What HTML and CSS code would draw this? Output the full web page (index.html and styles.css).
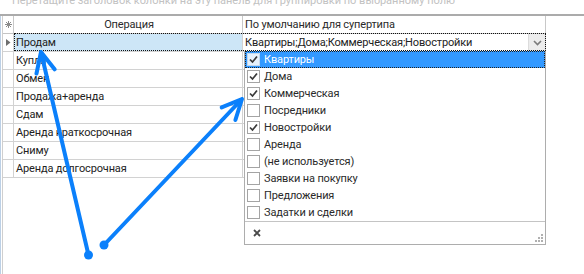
FILE: index.html
```html
<!DOCTYPE html>
<html lang="ru">
<head>
<meta charset="utf-8">
<link rel="stylesheet" href="styles.css">
</head>
<body>
<div class="page">
  <div class="group"><span>Перетащите заголовок колонки на эту панель для группировки по выбранному полю</span></div>
  <div class="frame">
    <div class="grid">
      <div class="row head">
        <div class="ind"><svg width="7" height="7" viewBox="0 0 7 7"><g stroke="#8a8a8a" stroke-width="1"><path d="M3.5 0V7M0 3.5H7M1 1L6 6M6 1L1 6"/></g></svg></div>
        <div class="cells">
          <div class="c1 hc center">Операция</div>
          <div class="c2 hc">По умолчанию для супертипа</div>
        </div>
      </div>
      <div class="row">
        <div class="ind"><svg width="5" height="7" viewBox="0 0 5 7"><path d="M0 0L4.5 3.5L0 7Z" fill="#6e6e6e"/></svg></div>
        <div class="cells focus">
          <div class="c1 selbg">Продам</div>
          <div class="c2 editor"><span>Квартиры;Дома;Коммерческая;Новостройки</span><div class="btn"><svg width="9" height="6" viewBox="0 0 9 6"><path d="M1 1L4.5 4.5L8 1" stroke="#7a7a7a" stroke-width="1.6" fill="none"/></svg></div></div>
        </div>
      </div>
      <div class="row"><div class="ind"></div><div class="cells"><div class="c1">Купля</div><div class="c2"></div></div></div>
      <div class="row"><div class="ind"></div><div class="cells"><div class="c1">Обмен</div><div class="c2"></div></div></div>
      <div class="row"><div class="ind"></div><div class="cells"><div class="c1">Продажа+аренда</div><div class="c2"></div></div></div>
      <div class="row"><div class="ind"></div><div class="cells"><div class="c1">Сдам</div><div class="c2"></div></div></div>
      <div class="row"><div class="ind"></div><div class="cells"><div class="c1">Аренда краткосрочная</div><div class="c2"></div></div></div>
      <div class="row"><div class="ind"></div><div class="cells"><div class="c1">Сниму</div><div class="c2"></div></div></div>
      <div class="row"><div class="ind"></div><div class="cells"><div class="c1">Аренда долгосрочная</div><div class="c2"></div></div></div>
    </div>
  </div>

  <div class="popup">
    <div class="items">
      <div class="item hl"><span class="cb on"><svg width="11" height="11" viewBox="0 0 11 11"><path d="M2 5.5L4.5 8L9 2.5" stroke="#3a3a3a" stroke-width="1.7" fill="none"/></svg></span><span>Квартиры</span></div>
      <div class="item"><span class="cb on"><svg width="11" height="11" viewBox="0 0 11 11"><path d="M2 5.5L4.5 8L9 2.5" stroke="#3a3a3a" stroke-width="1.7" fill="none"/></svg></span><span>Дома</span></div>
      <div class="item"><span class="cb on"><svg width="11" height="11" viewBox="0 0 11 11"><path d="M2 5.5L4.5 8L9 2.5" stroke="#3a3a3a" stroke-width="1.7" fill="none"/></svg></span><span>Коммерческая</span></div>
      <div class="item"><span class="cb"></span><span>Посредники</span></div>
      <div class="item"><span class="cb on"><svg width="11" height="11" viewBox="0 0 11 11"><path d="M2 5.5L4.5 8L9 2.5" stroke="#3a3a3a" stroke-width="1.7" fill="none"/></svg></span><span>Новостройки</span></div>
      <div class="item"><span class="cb"></span><span>Аренда</span></div>
      <div class="item"><span class="cb"></span><span>(не используется)</span></div>
      <div class="item"><span class="cb"></span><span>Заявки на покупку</span></div>
      <div class="item"><span class="cb"></span><span>Предложения</span></div>
      <div class="item"><span class="cb"></span><span>Задатки и сделки</span></div>
    </div>
    <div class="footer">
      <svg class="close" width="8" height="8" viewBox="0 0 8 8"><path d="M1 1L7 7M7 1L1 7" stroke="#4a4a4a" stroke-width="1.8"/></svg>
      <svg class="grip" width="8" height="8" viewBox="0 0 8 8"><g fill="#b0b0b0"><rect x="6" y="0" width="2" height="2"/><rect x="3" y="3" width="2" height="2"/><rect x="6" y="3" width="2" height="2"/><rect x="0" y="6" width="2" height="2"/><rect x="3" y="6" width="2" height="2"/><rect x="6" y="6" width="2" height="2"/></g></svg>
    </div>
  </div>

  <svg class="arrows" width="584" height="274" viewBox="0 0 584 274">
    <g stroke="#0b80fb" stroke-width="4" stroke-linecap="round" stroke-linejoin="round" fill="none">
      <path d="M88.5 255L41 52M36.5 73.5L41 52L54.6 69.3"/>
      <path d="M104 245L242 99M221.7 107.4L242 99L235.4 120"/>
    </g>
    <circle cx="88.5" cy="255" r="4.5" fill="#0b80fb"/>
    <circle cx="104" cy="245" r="4.5" fill="#0b80fb"/>
  </svg>
</div>
</body>
</html>
```

FILE: styles.css
```css
* { box-sizing: border-box; }

body {
  margin: 0;
  background: #fff;
  font-family: Roboto, "Noto Sans", sans-serif;
  font-size: 11px;
  letter-spacing: -0.15px;
  color: #222;
}

.page {
  position: relative;
  width: 584px;
  height: 274px;
  overflow: hidden;
  display: flex;
  flex-direction: column;
}

.group {
  flex: none;
  height: 16px;
  border-bottom: 2px solid #ababab;
  overflow: hidden;
  padding-left: 12px;
  color: #c2c2c2;
  line-height: 14px;
  letter-spacing: 0;
}

.group span {
  display: block;
  margin-top: -6px;
  white-space: nowrap;
}

.frame {
  flex: 1;
  border-left: 1px solid #bcd0e6;
  padding-left: 1px;
}

.grid {
  height: 100%;
  border-left: 1px solid #cfcfcf;
}

.row {
  display: flex;
  height: 18px;
  line-height: 17px;
}

.ind {
  width: 11px;
  border-right: 1px solid #d2d2d2;
  border-bottom: 1px solid #d2d2d2;
  display: flex;
  align-items: center;
  justify-content: center;
}

.cells {
  display: flex;
}

.c1, .c2 {
  border-right: 1px solid #d2d2d2;
  border-bottom: 1px solid #d2d2d2;
  white-space: nowrap;
  overflow: hidden;
  padding-left: 2px;
}

.c1 { width: 229px; }
.c2 { width: 303px; }

.head .ind,
.head .c1,
.head .c2 {
  border-bottom-color: #c4c4c4;
  border-right-color: #c8c8c8;
}

.hc { color: #2a2a2a; }
.center { text-align: center; }

.selbg { background: #cde6f7; }

.focus { position: relative; }
.focus::after {
  content: "";
  position: absolute;
  left: 0;
  right: 0;
  top: -1px;
  bottom: 1px;
  border: 1px dotted #111;
  pointer-events: none;
}

.editor {
  display: flex;
  justify-content: space-between;
  padding-right: 0;
}

.btn {
  width: 17px;
  height: 17px;
  background: #ececec;
  border-left: 1px solid #dcdcdc;
  display: flex;
  align-items: center;
  justify-content: center;
}

.popup {
  position: absolute;
  left: 244px;
  top: 51px;
  width: 302px;
  height: 194px;
  border: 1px solid #adadad;
  border-top: none;
  background: #fff;
  display: flex;
  flex-direction: column;
}

.item {
  height: 17px;
  display: flex;
  align-items: center;
  gap: 4px;
  padding-left: 2px;
  color: #2a2a2a;
  white-space: nowrap;
}

.item.hl {
  background: #3399ff;
  color: #fff;
  border: 1px dotted #222;
  padding-left: 1px;
}

.cb {
  width: 13px;
  height: 13px;
  border: 1px solid #a4a4a4;
  background: #fff;
  display: flex;
  align-items: center;
  justify-content: center;
  flex: none;
}

.hl .cb {
  background: #e6f1fc;
  border-color: #c2d8ee;
}

.footer {
  flex: 1;
  border-top: 1px solid #c4c4c4;
  display: flex;
  align-items: center;
  justify-content: space-between;
  padding-left: 8px;
  padding-right: 2px;
}

.grip {
  align-self: flex-end;
  margin-bottom: 2px;
}

.arrows {
  position: absolute;
  left: 0;
  top: 0;
  pointer-events: none;
}
```
